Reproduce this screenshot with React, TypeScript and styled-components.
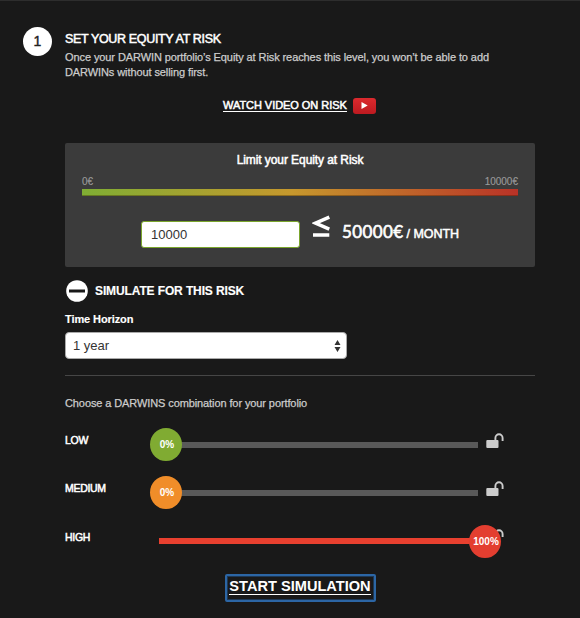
import React from "react";
import styled, { createGlobalStyle } from "styled-components";

const GlobalStyle = createGlobalStyle`
  * { box-sizing: border-box; }
  body {
    margin: 0;
    background: #191919;
    color: #fff;
    font-family: "Liberation Sans", Arial, sans-serif;
  }
`;

const Panel = styled.main`
  width: 580px;
  height: 618px;
  overflow: hidden;
  background: #191919;
  border-top: 1px solid #2d2d2d;
  padding: 26px 45px 0 23px;
  display: grid;
  grid-template-columns: 42px 470px;
  align-items: start;
`;

const StepNumber = styled.div`
  width: 29px;
  height: 29px;
  border-radius: 50%;
  background: #fff;
  color: #222;
  font-size: 14px;
  line-height: 29px;
  text-align: center;
  -webkit-text-stroke: 0.4px #222;
`;

const Content = styled.section`
  display: flex;
  flex-direction: column;
`;

const Label = styled.div<{
  $size: number;
  $line: number;
  $space?: number;
  $color?: string;
  $stroke?: number;
  $bold?: boolean;
}>`
  font-size: ${(p) => p.$size}px;
  line-height: ${(p) => p.$line}px;
  font-weight: ${(p) => (p.$bold ? 700 : 400)};
  letter-spacing: ${(p) => p.$space ?? 0}px;
  color: ${(p) => p.$color ?? "#fff"};
  -webkit-text-stroke: ${(p) => p.$stroke ?? 0}px currentColor;
  white-space: nowrap;
`;

const Title = styled(Label).attrs({ as: "h1" })`
  margin: 5px 0 3px;
`;

const VideoLink = styled.a`
  display: flex;
  align-items: center;
  gap: 6px;
  height: 18px;
  margin: 16px 0 29px 158px;
  color: #fff;
`;

const Underlined = styled(Label)`
  border-bottom: 1px solid #fff;
`;

const PlayBadge = styled.span`
  display: flex;
  align-items: center;
  justify-content: center;
  width: 23px;
  height: 16px;
  margin-top: 1px;
  border-radius: 3px;
  background: linear-gradient(#dc2a2e, #bd1a20);
`;

const LimitCard = styled.div`
  height: 124px;
  border-radius: 2px;
  background: #3b3b3b;
  padding: 9px 17px 0;
  text-align: center;
`;

const Range = styled.div`
  display: flex;
  justify-content: space-between;
  margin: 7px 0 1px;
`;

const RiskBar = styled.div`
  height: 7px;
  background: linear-gradient(90deg, #7fae34, #c6982d 48%, #b93227);
  box-shadow: inset 0 -1px rgba(50, 30, 0, 0.35);
`;

const LimitRow = styled.div`
  display: flex;
  height: 30px;
  margin: 23px 0 0 59px;
`;

const AmountInput = styled.input`
  width: 159px;
  height: 27px;
  margin-top: 2px;
  border: 1px solid #7aa52d;
  border-radius: 3px;
  padding: 0 9px;
  background: #fff;
  color: #333;
  font: 13px "Liberation Sans", Arial, sans-serif;
`;

const LessIcon = styled.svg`
  width: 18px;
  height: 22px;
  margin: -4px 0 0 12px;
`;

const Monthly = styled.div`
  display: flex;
  align-items: baseline;
  height: 24px;
  margin: 1px 0 0 12px;
  gap: 3px;
`;

const Amount = styled(Label)`
  font-family: Lato, sans-serif;
`;

const SimulateHead = styled.div`
  display: flex;
  align-items: center;
  gap: 7px;
  height: 22px;
  margin: 13px 0 10px 1px;
`;

const SelectBox = styled.div`
  display: flex;
  align-items: center;
  justify-content: space-between;
  width: 282px;
  height: 27px;
  margin-top: 6px;
  border: 1px solid #aaa;
  border-radius: 4px;
  background: #fff;
  padding: 0 5px 0 7px;
`;

const Divider = styled.hr`
  width: 100%;
  height: 1px;
  border: 0;
  margin: 16px 0 20px;
  background: #464646;
`;

const Sliders = styled.div`
  margin-top: 16px;
`;

const SliderRow = styled.div`
  display: grid;
  grid-template-columns: 94px 319px 8px 18px;
  height: 48px;
  align-items: start;
`;

const SliderName = styled(Label)<{ $drop: number }>`
  margin-top: ${(p) => p.$drop}px;
`;

const Track = styled.div<{ $color: string }>`
  position: relative;
  height: 6px;
  margin-top: 15px;
  background: ${(p) => p.$color};
`;

const Knob = styled.div<{ $color: string; $left: number; $top: number }>`
  position: absolute;
  z-index: 1;
  left: ${(p) => p.$left}px;
  top: ${(p) => p.$top}px;
  width: 32px;
  height: 33px;
  border-radius: 50%;
  background: ${(p) => p.$color};
  display: flex;
  align-items: center;
  justify-content: center;
  padding-left: 2px;
`;

const LockSvg = styled.svg`
  grid-column: 4;
  width: 18px;
  height: 16px;
  margin-top: 6px;
`;

const StartButton = styled.button`
  align-self: flex-start;
  width: 151px;
  height: 28px;
  margin: 3px 0 0 160px;
  padding: 0 1px 2px 0;
  border: 2px solid #2c66a5;
  outline: 1px solid #1d3856;
  outline-offset: -3px;
  border-radius: 2px;
  background: #191919;
  display: flex;
  align-items: center;
  justify-content: center;
`;

const StartText = styled(Label)`
  font-family: "Liberation Sans", Arial, sans-serif;
  border-bottom: 1px solid #fff;
`;

const Lock = () => (
  <LockSvg viewBox="0 0 18 16">
    <rect x="0.3" y="7" width="12.2" height="8" rx="1" fill="#ccc" />
    <path d="M9.4 7.2V4.9a3.6 3.6 0 0 1 7.2 0V8" fill="none" stroke="#ccc" strokeWidth="1.9" />
  </LockSvg>
);

const levels = [
  { name: "LOW", value: "0%", color: "#80ab32", track: "#595959", left: -9, top: -14, drop: 6 },
  { name: "MEDIUM", value: "0%", color: "#f08d29", track: "#595959", left: -9, top: -14, drop: 6 },
  { name: "HIGH", value: "100%", color: "#e33e30", track: "#e8402f", left: 310, top: -13, drop: 7 },
];

export default function App() {
  return (
    <>
      <GlobalStyle />
      <Panel>
        <StepNumber>1</StepNumber>
        <Content>
          <Title $size={12.5} $line={15} $space={-0.34} $stroke={0.5}>SET YOUR EQUITY AT RISK</Title>
          <Label $size={11} $line={15} $space={-0.09} $color="#ccc" $stroke={0.25}>
            Once your DARWIN portfolio’s Equity at Risk reaches this level, you won’t be able to add
            <br />
            DARWINs without selling first.
          </Label>
          <VideoLink>
            <Underlined $size={11} $line={12} $space={-0.05} $stroke={0.5}>WATCH VIDEO ON RISK</Underlined>
            <PlayBadge>
              <svg width="7" height="7" viewBox="0 0 7 7"><path d="M0.5 0L6.7 3.5L0.5 7Z" fill="#fff" /></svg>
            </PlayBadge>
          </VideoLink>
          <LimitCard>
            <Label $size={12} $line={16} $space={-0.08} $stroke={0.5}>Limit your Equity at Risk</Label>
            <Range>
              <Label $size={10} $line={13} $color="#999" $stroke={0.15}>0€</Label>
              <Label $size={10} $line={13} $color="#999" $stroke={0.15}>10000€</Label>
            </Range>
            <RiskBar />
            <LimitRow>
              <AmountInput defaultValue="10000" />
              <LessIcon viewBox="0 0 18 22">
                <path d="M17.3 2.2L3.5 8.2L17.3 14.2M1 20H17.3" fill="none" stroke="#fff" strokeWidth="3.5" />
              </LessIcon>
              <Monthly>
                <Amount $size={17} $line={24} $space={0.4} $stroke={0.6}>50000€</Amount>
                <Label $size={12.5} $line={24} $space={-0.05} $stroke={0.5}>/ MONTH</Label>
              </Monthly>
            </LimitRow>
          </LimitCard>
          <SimulateHead>
            <svg width="22" height="22" viewBox="0 0 22 22">
              <circle cx="11" cy="11" r="10.8" fill="#fff" />
              <path d="M3 11H19" stroke="#191919" strokeWidth="3" />
            </svg>
            <Label $size={12} $line={18} $space={-0.12} $stroke={0.15} $bold>SIMULATE FOR THIS RISK</Label>
          </SimulateHead>
          <Label $size={11} $line={14} $space={-0.1} $stroke={0.15} $bold>Time Horizon</Label>
          <SelectBox>
            <Label $size={13} $line={24} $color="#333">1 year</Label>
            <svg width="7" height="12" viewBox="0 0 7 12">
              <path d="M0.5 5L3.5 0L6.5 5ZM0.5 7L3.5 12L6.5 7Z" fill="#333" />
            </svg>
          </SelectBox>
          <Divider />
          <Label $size={11} $line={15} $space={-0.1} $color="#ccc" $stroke={0.25}>
            Choose a DARWINS combination for your portfolio
          </Label>
          <Sliders>
            {levels.map((l) => (
              <SliderRow key={l.name}>
                <SliderName $size={10.5} $line={14} $space={-0.3} $stroke={0.5} $drop={l.drop}>{l.name}</SliderName>
                <Track $color={l.track}>
                  <Knob $color={l.color} $left={l.left} $top={l.top}>
                    <Label $size={10} $line={14} $bold>{l.value}</Label>
                  </Knob>
                </Track>
                <Lock />
              </SliderRow>
            ))}
          </Sliders>
          <StartButton>
            <StartText $size={14.6} $line={15} $bold>START SIMULATION</StartText>
          </StartButton>
        </Content>
      </Panel>
    </>
  );
}
